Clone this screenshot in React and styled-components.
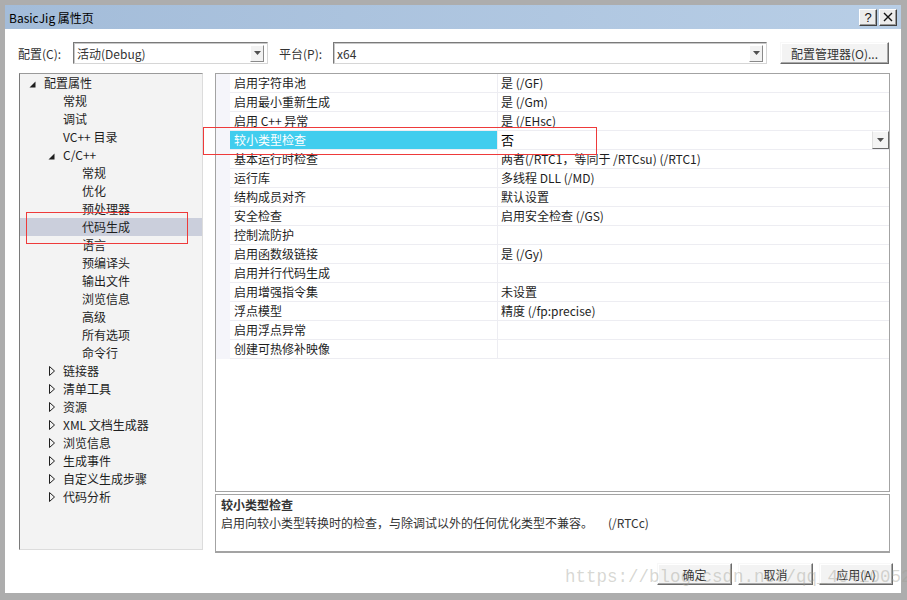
import React from "react";
import styled, { createGlobalStyle } from "styled-components";

const GlobalStyle = createGlobalStyle`
  html, body {
    margin: 0;
    padding: 0;
    background: #fff;
  }
  body {
    font-family: "Noto Sans CJK SC", "Noto Sans", sans-serif;
    font-size: 12px;
    color: #1e1e1e;
  }
`;

const TREE = [
  { label: "配置属性", level: 0, exp: "open" },
  { label: "常规", level: 1 },
  { label: "调试", level: 1 },
  { label: "VC++ 目录", level: 1 },
  { label: "C/C++", level: 1, exp: "open" },
  { label: "常规", level: 2 },
  { label: "优化", level: 2 },
  { label: "预处理器", level: 2 },
  { label: "代码生成", level: 2, selected: true },
  { label: "语言", level: 2 },
  { label: "预编译头", level: 2 },
  { label: "输出文件", level: 2 },
  { label: "浏览信息", level: 2 },
  { label: "高级", level: 2 },
  { label: "所有选项", level: 2 },
  { label: "命令行", level: 2 },
  { label: "链接器", level: 1, exp: "closed" },
  { label: "清单工具", level: 1, exp: "closed" },
  { label: "资源", level: 1, exp: "closed" },
  { label: "XML 文档生成器", level: 1, exp: "closed" },
  { label: "浏览信息", level: 1, exp: "closed" },
  { label: "生成事件", level: 1, exp: "closed" },
  { label: "自定义生成步骤", level: 1, exp: "closed" },
  { label: "代码分析", level: 1, exp: "closed" },
];

const PROPS = [
  ["启用字符串池", "是 (/GF)"],
  ["启用最小重新生成", "是 (/Gm)"],
  ["启用 C++ 异常", "是 (/EHsc)"],
  ["较小类型检查", "否", true],
  ["基本运行时检查", "两者(/RTC1，等同于 /RTCsu) (/RTC1)"],
  ["运行库", "多线程 DLL (/MD)"],
  ["结构成员对齐", "默认设置"],
  ["安全检查", "启用安全检查 (/GS)"],
  ["控制流防护", ""],
  ["启用函数级链接", "是 (/Gy)"],
  ["启用并行代码生成", ""],
  ["启用增强指令集", "未设置"],
  ["浮点模型", "精度 (/fp:precise)"],
  ["启用浮点异常", ""],
  ["创建可热修补映像", ""],
];

function DownArrow() {
  return (
    <svg width="7" height="4" viewBox="0 0 7 4">
      <polygon points="0,0 7,0 3.5,4" fill="#505050" />
    </svg>
  );
}

function Expander({ kind }) {
  if (kind === "open") {
    return (
      <svg width="7" height="7" viewBox="0 0 7 7" style={{ marginTop: 2 }}>
        <polygon points="6.5,0.5 6.5,6.5 0.5,6.5" fill="#1e1e1e" />
      </svg>
    );
  }
  if (kind === "closed") {
    return (
      <svg width="7" height="10" viewBox="0 0 7 10" style={{ marginLeft: 1 }}>
        <polygon
          points="0.5,0.5 5.5,5 0.5,9.5"
          fill="none"
          stroke="#1e1e1e"
          strokeWidth="1"
        />
      </svg>
    );
  }
  return null;
}

export default function App() {
  return (
    <>
      <GlobalStyle />
      <Frame>
        <TitleBar>
          <span>BasicJig 属性页</span>
          <CaptionButtons>
            <CaptionButton>?</CaptionButton>
            <CaptionButton>
              <svg width="10" height="10" viewBox="0 0 10 10">
                <path d="M1 1 L9 9 M9 1 L1 9" stroke="#111" strokeWidth="1.4" />
              </svg>
            </CaptionButton>
          </CaptionButtons>
        </TitleBar>

        <Client>
          <TopRow>
            <Label $w={55}>配置(C):</Label>
            <Combo $w={195}>
              活动(Debug)
              <DropButton>
                <DownArrow />
              </DropButton>
            </Combo>
            <Label $w={54} style={{ marginLeft: 11 }}>
              平台(P):
            </Label>
            <Combo $w={434}>
              x64
              <DropButton>
                <DownArrow />
              </DropButton>
            </Combo>
            <PushButton $w={109} style={{ marginLeft: 13 }}>
              配置管理器(O)...
            </PushButton>
          </TopRow>

          <Main>
            <TreePanel>
              {TREE.map((item, i) => (
                <TreeRow key={i} $level={item.level} $selected={item.selected}>
                  <ExpanderSlot>
                    <Expander kind={item.exp} />
                  </ExpanderSlot>
                  {item.label}
                </TreeRow>
              ))}
            </TreePanel>

            <RightCol>
              <Grid>
                {PROPS.map(([name, value, sel], i) => (
                  <GridRow key={i}>
                    <Gutter />
                    <NameCell $selected={sel}>{name}</NameCell>
                    <ValueCell $selected={sel}>
                      {value}
                      {sel && (
                        <CellDrop>
                          <DownArrow />
                        </CellDrop>
                      )}
                    </ValueCell>
                  </GridRow>
                ))}
              </Grid>
              <Description>
                <DescTitle>较小类型检查</DescTitle>
                <DescText>
                  启用向较小类型转换时的检查，与除调试以外的任何优化类型不兼容。
                  <Switch>(/RTCc)</Switch>
                </DescText>
              </Description>
            </RightCol>
          </Main>

          <ButtonRow>
            <PushButton $w={75}>确定</PushButton>
            <PushButton $w={75}>取消</PushButton>
            <PushButton $w={74}>应用(A)</PushButton>
          </ButtonRow>
        </Client>

        <Marker $x={203} $y={127} $w={394} $h={28} />
        <Marker $x={26} $y={212} $w={162} $h={32} />
        <Watermark>https://blog.csdn.net/qq_40410052</Watermark>
      </Frame>
    </>
  );
}

const Frame = styled.div`
  position: relative;
  width: 907px;
  height: 600px;
  box-sizing: border-box;
  padding: 5px 6px 7px 5px;
  background: #adadad;
  display: flex;
  flex-direction: column;
  overflow: hidden;
`;

const TitleBar = styled.div`
  height: 24px;
  flex: none;
  display: flex;
  align-items: center;
  padding: 0 4px;
  background: linear-gradient(to right, #a3bcd9, #b8cee6);
  color: #000;
  font-size: 12px;
`;

const CaptionButtons = styled.div`
  margin-left: auto;
  display: flex;
  gap: 2px;
`;

const CaptionButton = styled.div`
  width: 18px;
  height: 17px;
  box-sizing: border-box;
  border: 1px solid;
  border-color: #ffffff #404040 #404040 #ffffff;
  box-shadow: inset -1px -1px #9a9a9a;
  background: #ececec;
  display: flex;
  align-items: center;
  justify-content: center;
  font-family: "Liberation Sans", sans-serif;
  font-size: 13px;
  color: #111;
`;

const Client = styled.div`
  flex: 1;
  background: #fff;
  display: flex;
  flex-direction: column;
`;

const TopRow = styled.div`
  display: flex;
  align-items: center;
  height: 22px;
  margin-top: 13px;
  padding-left: 13px;
`;

const Label = styled.div`
  width: ${(p) => p.$w}px;
  flex: none;
  color: #333;
`;

const Combo = styled.div`
  width: ${(p) => p.$w}px;
  height: 22px;
  flex: none;
  box-sizing: border-box;
  border: 1px solid;
  border-color: #7a7a7a #d6d6d6 #d6d6d6 #7a7a7a;
  box-shadow: inset 1px 1px #c8c8c8;
  display: flex;
  align-items: center;
  padding-left: 3px;
  color: #333;
`;

const DropButton = styled.div`
  margin-left: auto;
  margin-right: 3px;
  width: 14px;
  height: 17px;
  box-sizing: border-box;
  border: 1px solid;
  border-color: #ffffff #8a8a8a #8a8a8a #ffffff;
  background: #f2f2f2;
  display: flex;
  align-items: center;
  justify-content: center;
`;

const PushButton = styled.div`
  width: ${(p) => p.$w}px;
  height: 22px;
  flex: none;
  box-sizing: border-box;
  border: 1px solid;
  border-color: #f8f8f8 #6a6a6a #6a6a6a #f8f8f8;
  box-shadow: inset -1px -1px #a8a8a8, inset 1px 1px #ffffff;
  background: #f3f3f3;
  display: flex;
  align-items: center;
  justify-content: center;
  color: #333;
`;

const Main = styled.div`
  display: flex;
  gap: 12px;
  height: 480px;
  margin-top: 9px;
  padding-left: 14px;
`;

const TreePanel = styled.div`
  width: 184px;
  height: 477px;
  flex: none;
  box-sizing: border-box;
  border: 1px solid;
  border-color: #9a9a9a #dcdcdc #dcdcdc #7a7a7a;
  background: #f3f3f3;
`;

const TreeRow = styled.div`
  height: 18px;
  line-height: 18px;
  display: flex;
  align-items: center;
  padding-left: ${(p) => 9 + p.$level * 19}px;
  background: ${(p) => (p.$selected ? "#cbcfdc" : "transparent")};
  color: #1e1e1e;
  white-space: nowrap;
`;

const ExpanderSlot = styled.div`
  width: 15px;
  flex: none;
  display: flex;
  align-items: center;
`;

const RightCol = styled.div`
  width: 675px;
  display: flex;
  flex-direction: column;
  gap: 2px;
`;

const Grid = styled.div`
  height: 419px;
  box-sizing: border-box;
  border: 1px solid #a3a3a3;
  background: #fff;
`;

const GridRow = styled.div`
  display: grid;
  grid-template-columns: 14px 268px 1fr;
  height: 19px;
`;

const Gutter = styled.div`
  background: #f5f5fa;
`;

const NameCell = styled.div`
  box-sizing: border-box;
  border-bottom: 1px solid #ededf2;
  border-right: 1px solid #ededf2;
  padding-left: 4px;
  line-height: 18px;
  background: ${(p) => (p.$selected ? "#41cdee" : "#fff")};
  color: ${(p) => (p.$selected ? "#fff" : "#1e1e1e")};
  white-space: nowrap;
`;

const ValueCell = styled.div`
  box-sizing: border-box;
  border-bottom: 1px solid #ededf2;
  padding-left: 3px;
  line-height: 18px;
  display: flex;
  align-items: center;
  color: ${(p) => (p.$selected ? "#000" : "#1e1e1e")};
  font-size: ${(p) => (p.$selected ? "13px" : "12px")};
  white-space: nowrap;
`;

const CellDrop = styled.div`
  margin-left: auto;
  width: 17px;
  height: 18px;
  box-sizing: border-box;
  border: 1px solid;
  border-color: #ffffff #6a6a6a #6a6a6a #e0e0e0;
  background: #f4f4f4;
  display: flex;
  align-items: center;
  justify-content: center;
`;

const Description = styled.div`
  height: 59px;
  box-sizing: border-box;
  border: 1px solid #a3a3a3;
  border-bottom-width: 2px;
  padding: 1px 5px;
  color: #333;
`;

const DescTitle = styled.div`
  font-weight: bold;
  line-height: 18px;
`;

const DescText = styled.div`
  line-height: 18px;
  white-space: nowrap;
`;

const Switch = styled.span`
  margin-left: 15px;
`;

const ButtonRow = styled.div`
  display: flex;
  justify-content: flex-end;
  gap: 6px;
  height: 22px;
  margin-top: 10px;
  padding-right: 8px;
`;

const Marker = styled.div`
  position: absolute;
  left: ${(p) => p.$x}px;
  top: ${(p) => p.$y}px;
  width: ${(p) => p.$w}px;
  height: ${(p) => p.$h}px;
  box-sizing: border-box;
  border: 1px solid #ee3a3a;
  pointer-events: none;
`;

const Watermark = styled.div`
  position: absolute;
  left: 565px;
  top: 567px;
  font-family: "Liberation Mono", monospace;
  font-size: 17.5px;
  line-height: 20px;
  color: rgba(160, 160, 150, 0.42);
  white-space: nowrap;
  pointer-events: none;
`;
